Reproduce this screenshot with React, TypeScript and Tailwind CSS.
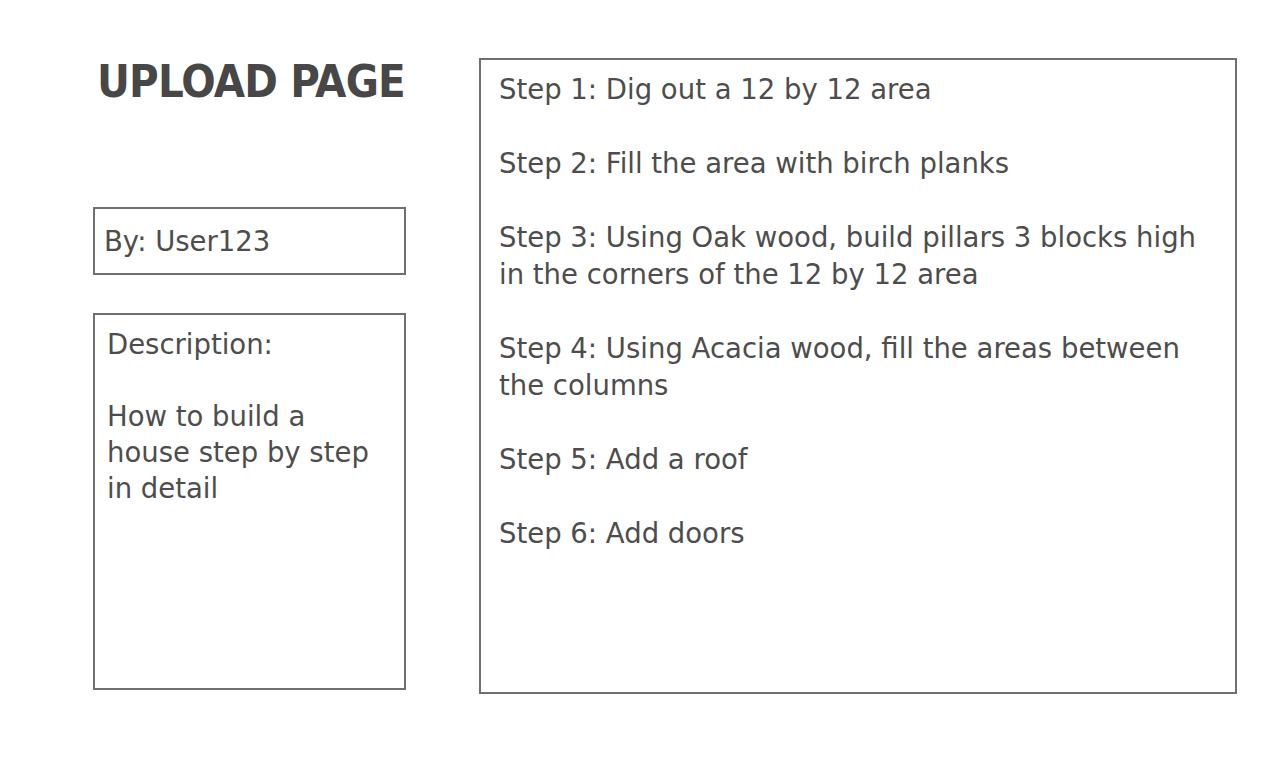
const steps = [
  ['Step 1: Dig out a 12 by 12 area'],
  ['Step 2: Fill the area with birch planks'],
  ['Step 3: Using Oak wood, build pillars 3 blocks high', 'in the corners of the 12 by 12 area'],
  ['Step 4: Using Acacia wood, fill the areas between', 'the columns'],
  ['Step 5: Add a roof'],
  ['Step 6: Add doors'],
]

export default function App() {
  return (
    <div
      className="min-h-screen bg-white text-[#4d4d4d] flex items-start pt-[58px] pl-[93px] gap-[73px]"
      style={{ fontFamily: '"DejaVu Sans", Verdana, sans-serif' }}
    >
      {/* Left column */}
      <div className="w-[313px] flex flex-col">
        <h1
          className="pl-[4px] text-[45px] leading-[48px] font-bold text-[#474747] tracking-[-0.8px]"
          style={{ fontFamily: '"DejaVu Sans Condensed", "DejaVu Sans", sans-serif' }}
        >
          UPLOAD PAGE
        </h1>

        <div className="mt-[101px] h-[68px] border-2 border-[#707070] flex items-center px-[9px] text-[27.5px] leading-[36px]">
          By: User123
        </div>

        <div className="mt-[38px] h-[377px] border-2 border-[#707070] px-[12px] pt-[11px] text-[27.5px] leading-[36px]">
          <p>Description:</p>
          <p className="mt-[36px]">
            How to build a
            <br />
            house step by step
            <br />
            in detail
          </p>
        </div>
      </div>

      {/* Steps panel */}
      <div className="w-[758px] h-[636px] border-2 border-[#707070] pl-[18px] pt-[11px] text-[27.5px] leading-[37px] flex flex-col gap-[37px]">
        {steps.map((lines, i) => (
          <p key={i}>
            {lines.map((l, j) => (
              <span key={j} className="block">
                {l}
              </span>
            ))}
          </p>
        ))}
      </div>
    </div>
  )
}
